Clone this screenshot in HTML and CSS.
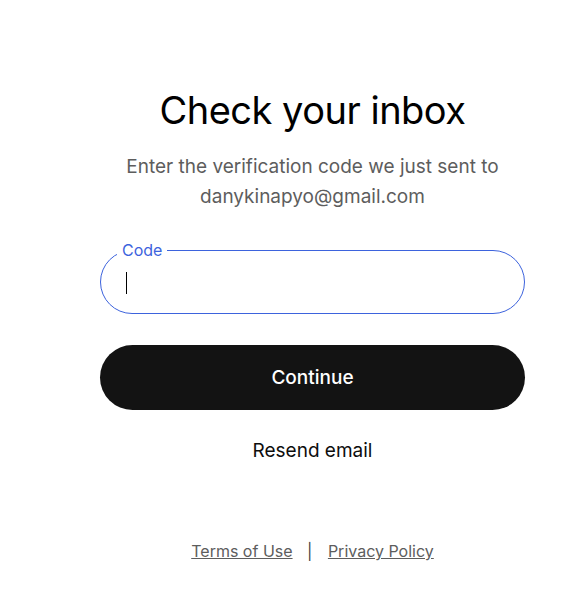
FILE: index.html
```html
<!DOCTYPE html>
<html lang="en">
<head>
  <meta charset="UTF-8">
  <meta name="viewport" content="width=device-width, initial-scale=1.0">
  <title>Check your inbox</title>
  <link rel="stylesheet" href="styles.css">
</head>
<body>
  <div class="container">
    <h1>Check your inbox</h1>
    <p class="subtitle">Enter the verification code we just sent to<br>danykinapyo@gmail.com</p>

    <form id="codeForm" class="form">
      <div class="field">
        <label for="code">Code</label>
        <input type="text" id="code" name="code" autocomplete="one-time-code">
        <span class="caret"></span>
      </div>
      <button type="submit" class="btn-primary">Continue</button>
    </form>

    <button type="button" class="btn-link">Resend email</button>

    <div class="footer">
      <a href="#">Terms of Use</a>
      <span class="sep">|</span>
      <a href="#">Privacy Policy</a>
    </div>
  </div>
</body>
</html>
```

FILE: styles.css
```css
body {
  margin: 0;
  background: #fff;
  font-family: Inter, "Noto Sans", sans-serif;
  color: #0d0d0d;
}
.container {
  width: 425px;
  margin-left: 100px;
  padding-top: 86px;
  text-align: center;
}
h1 {
  margin: 0;
  font-size: 38px;
  font-weight: 400;
  line-height: 48px;
  letter-spacing: -0.5px;
  color: #000;
}
.subtitle {
  margin: 18px 0 0;
  font-size: 19px;
  line-height: 30px;
  color: #5d5d5d;
}
.form {
  margin-top: 38px;
}
.field {
  position: relative;
  height: 64px;
  border: 1px solid #3d63dd;
  border-radius: 32px;
  box-sizing: border-box;
}
.field label {
  position: absolute;
  left: 16px;
  top: -10px;
  padding: 0 5px;
  background: #fff;
  color: #3d63dd;
  font-size: 16px;
  line-height: 19px;
}
.field input {
  width: 100%;
  height: 100%;
  border: none;
  outline: none;
  background: transparent;
  padding: 0 24px;
  font-size: 18px;
  font-family: inherit;
  box-sizing: border-box;
  caret-color: transparent;
}
.caret {
  position: absolute;
  left: 25px;
  top: 21px;
  width: 1px;
  height: 22px;
  background: #000;
}
.btn-primary {
  display: block;
  width: 100%;
  height: 65px;
  margin-top: 31px;
  border: none;
  border-radius: 33px;
  background: #131313;
  color: #fff;
  font-family: inherit;
  font-size: 19px;
  font-weight: 500;
  cursor: pointer;
}
.btn-link {
  margin-top: 28px;
  border: none;
  background: none;
  font-family: inherit;
  font-size: 19px;
  color: #0d0d0d;
  cursor: pointer;
}
.footer {
  margin-top: 78px;
  font-size: 16px;
  color: #5d5d5d;
}
.footer a {
  color: #5d5d5d;
  text-decoration: underline;
}
.sep {
  margin: 0 11px 0 10px;
  color: #444;
}
```
